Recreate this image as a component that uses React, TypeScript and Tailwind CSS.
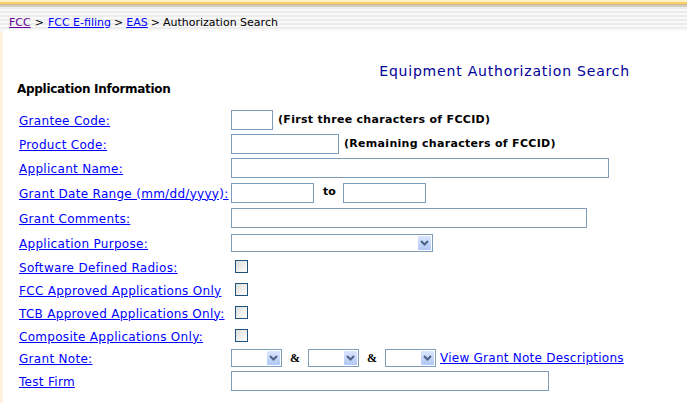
import type { ReactNode } from "react";

const font = { fontFamily: '"DejaVu Sans", Verdana, sans-serif' };

function TextBox({ w }: { w: string }) {
  return <div className={`h-[20px] border border-[#7f9db9] bg-white ${w}`} />;
}

function Select({ w }: { w: string }) {
  return (
    <div className={`flex h-[18px] items-stretch justify-end border border-[#7f9db9] bg-white p-px ${w}`}>
      <div className="flex w-[13px] items-center justify-center rounded-[1px] bg-gradient-to-b from-[#dbe6fd] to-[#b1c7f7]">
        <svg width="9" height="6" viewBox="0 0 9 6">
          <path d="M1 1 L4.5 4.5 L8 1" fill="none" stroke="#4d6185" strokeWidth="2" />
        </svg>
      </div>
    </div>
  );
}

function Check() {
  return (
    <div className="ml-[4px] h-[13px] w-[13px] border border-[#1c5180] bg-gradient-to-br from-[#dcdcd7] to-white" />
  );
}

function Amp() {
  return (
    <span
      className="inline-block w-[26px] text-center text-[12px] font-bold"
      style={{ fontFamily: '"Liberation Serif", serif' }}
    >
      &amp;
    </span>
  );
}

function Row({ label, h, children }: { label: string; h: string; children?: ReactNode }) {
  return (
    <div className={`flex items-center ${h}`}>
      <div className="w-[212px] shrink-0">
        <a href="#" className="text-[12px] tracking-[0.3px] text-[#0000ff] underline">
          {label}
        </a>
      </div>
      <div className="flex items-center">{children}</div>
    </div>
  );
}

export default function App() {
  return (
    <div className="relative h-[403px] w-[687px] overflow-hidden bg-white text-black" style={font}>
      {/* faint left edge */}
      <div className="absolute left-0 top-[31px] h-[372px] w-[3px] bg-[#fdf3de]" />

      <div className="h-[2px] bg-[#fff2c4]" />
      <div className="h-[2px] bg-[#ffcc66]" />
      <div className="h-[3px] bg-gradient-to-b from-[#c9b48b] to-[#d8d8d8]" />
      <div className="flex h-[24px] items-center bg-[repeating-linear-gradient(180deg,#ececec_0px,#ececec_2px,#f9f9f9_2px,#f9f9f9_4px)] pl-[9px] pt-[8px] text-[11px]">
        <a href="#" className="text-[#660099] underline">FCC</a>
        <span className="mx-[4px]">&gt;</span>
        <a href="#" className="text-[#0000ff] underline">FCC E-filing</a>
        <span className="mx-[3px]">&gt;</span>
        <a href="#" className="text-[#0000ff] underline">EAS</a>
        <span className="mx-[3px]">&gt;</span>
        <span>Authorization Search</span>
      </div>

      <div className="flex justify-end pr-[57px] pt-[32px]">
        <h1 className="text-[14px] leading-[17px] tracking-[0.8px] text-[#000099]">Equipment Authorization Search</h1>
      </div>
      <div className="pl-[17px] pt-[2px] text-[12px] font-bold leading-[15px] tracking-[-0.3px]">Application Information</div>

      <div className="pl-[19px] pt-[11px]">
        <Row label="Grantee Code:" h="h-[24px]">
          <TextBox w="w-[42px]" />
          <span className="ml-[5px] text-[11px] font-bold tracking-[0.3px]">(First three characters of FCCID)</span>
        </Row>
        <Row label="Product Code:" h="h-[24px]">
          <TextBox w="w-[108px]" />
          <span className="ml-[5px] text-[11px] font-bold tracking-[0.3px]">(Remaining characters of FCCID)</span>
        </Row>
        <Row label="Applicant Name:" h="h-[24px]">
          <TextBox w="w-[378px]" />
        </Row>
        <Row label="Grant Date Range (mm/dd/yyyy):" h="h-[25px]">
          <TextBox w="w-[83px]" />
          <span className="ml-[9px] mr-[7px] text-[11px] font-bold">to</span>
          <TextBox w="w-[83px]" />
        </Row>
        <Row label="Grant Comments:" h="h-[25px]">
          <TextBox w="w-[356px]" />
        </Row>
        <Row label="Application Purpose:" h="h-[25px]">
          <Select w="w-[202px]" />
        </Row>
        <Row label="Software Defined Radios:" h="h-[23px]">
          <Check />
        </Row>
        <Row label="FCC Approved Applications Only" h="h-[23px]">
          <Check />
        </Row>
        <Row label="TCB Approved Applications Only:" h="h-[23px]">
          <Check />
        </Row>
        <Row label="Composite Applications Only:" h="h-[23px]">
          <Check />
        </Row>
        <Row label="Grant Note:" h="h-[22px]">
          <Select w="w-[51px]" />
          <Amp />
          <Select w="w-[51px]" />
          <Amp />
          <Select w="w-[51px]" />
          <a href="#" className="ml-[4px] text-[12px] tracking-[0.25px] text-[#0000ff] underline">View Grant Note Descriptions</a>
        </Row>
        <Row label="Test Firm" h="h-[23px]">
          <TextBox w="w-[318px]" />
        </Row>
      </div>
    </div>
  );
}
